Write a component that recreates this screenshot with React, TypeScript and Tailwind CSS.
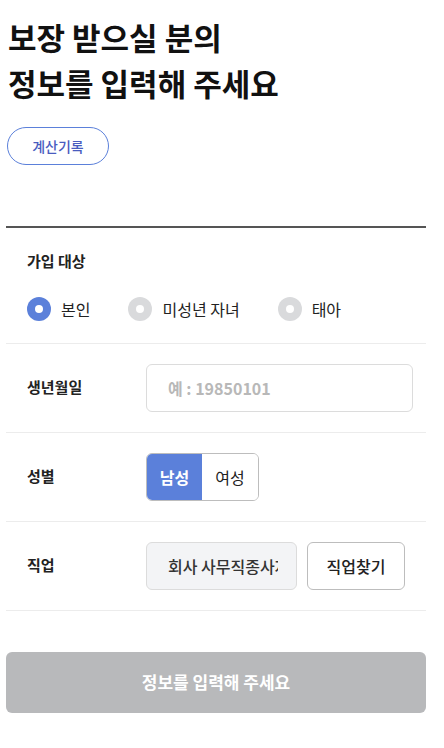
import { useState } from "react";

const font = { fontFamily: '"Noto Sans CJK KR", "Noto Sans", sans-serif' };

const targets = ["본인", "미성년 자녀", "태아"];

function Radio({ label, checked, onClick }: { label: string; checked: boolean; onClick: () => void }) {
  return (
    <button type="button" onClick={onClick} className="flex items-center gap-[10px]">
      <span
        className={`flex h-6 w-6 items-center justify-center rounded-full ${
          checked ? "bg-[#5b80da]" : "bg-[#d9dadc]"
        }`}
      >
        <span className="h-2 w-2 rounded-full bg-white" />
      </span>
      <span className="text-[16px] text-[#222]">{label}</span>
    </button>
  );
}

function Row({ label, children }: { label: string; children: React.ReactNode }) {
  return (
    <div className="flex h-[89px] items-center border-b border-[#ececec] pl-[21px] pr-[13px]">
      <div className="w-[119px] shrink-0 text-[15px] font-semibold text-[#222]">{label}</div>
      <div className="flex flex-1 items-center">{children}</div>
    </div>
  );
}

export default function App() {
  const [target, setTarget] = useState("본인");
  const [gender, setGender] = useState("남성");

  return (
    <div className="min-h-screen bg-white pl-[6px] pr-[18px]" style={font}>
      <h1 className="pl-[2px] pt-[14px] text-[31px] font-bold leading-[46px] text-[#111]">
        보장 받으실 분의
        <br />
        정보를 입력해 주세요
      </h1>

      <button
        type="button"
        className="mt-[21px] ml-[1px] h-[38px] w-[102px] rounded-full border border-[#5b80da] text-[14px] font-medium text-[#4a5cbf]"
      >
        계산기록
      </button>

      <div className="mt-[61px] border-t-2 border-[#555]" />

      <section className="border-b border-[#ececec] pl-[21px] pb-[22px]">
        <div className="pt-[22px] text-[15px] font-semibold text-[#222]">가입 대상</div>
        <div className="mt-[24px] flex items-center gap-[38px]">
          {targets.map((t) => (
            <Radio key={t} label={t} checked={target === t} onClick={() => setTarget(t)} />
          ))}
        </div>
      </section>

      <Row label="생년월일">
        <input
          placeholder="예 : 19850101"
          className="h-12 w-full rounded-[6px] border border-[#dcdcdc] px-[21px] text-[16px] font-semibold text-[#222] outline-none placeholder:text-[#b8b8b8]"
        />
      </Row>

      <Row label="성별">
        <div className="flex h-12 overflow-hidden rounded-[6px] border border-[#bdbdbd]">
          <button
            type="button"
            onClick={() => setGender("남성")}
            className={`h-full w-[55px] text-[16px] ${
              gender === "남성" ? "bg-[#5b80da] font-semibold text-white" : "bg-white text-[#222]"
            }`}
          >
            남성
          </button>
          <button
            type="button"
            onClick={() => setGender("여성")}
            className={`h-full w-[56px] text-[16px] ${
              gender === "여성" ? "bg-[#5b80da] font-semibold text-white" : "bg-white text-[#222]"
            }`}
          >
            여성
          </button>
        </div>
      </Row>

      <Row label="직업">
        <div className="flex w-full items-center gap-[10px]">
          <div className="flex h-12 w-[151px] items-center whitespace-nowrap rounded-[6px] border border-[#dcdcdc] bg-[#f3f4f6] pl-[21px] pr-[18px] text-[16px] font-medium text-[#333]">
            <span className="block overflow-hidden">회사 사무직종사자</span>
          </div>
          <button
            type="button"
            className="h-12 w-[98px] rounded-[6px] border border-[#bdbdbd] bg-white text-[16px] font-medium text-[#222]"
          >
            직업찾기
          </button>
        </div>
      </Row>

      <button
        type="button"
        className="mt-[41px] h-[61px] w-full rounded-[6px] bg-[#b8b9bb] text-[17px] font-bold text-white"
      >
        정보를 입력해 주세요
      </button>
    </div>
  );
}
